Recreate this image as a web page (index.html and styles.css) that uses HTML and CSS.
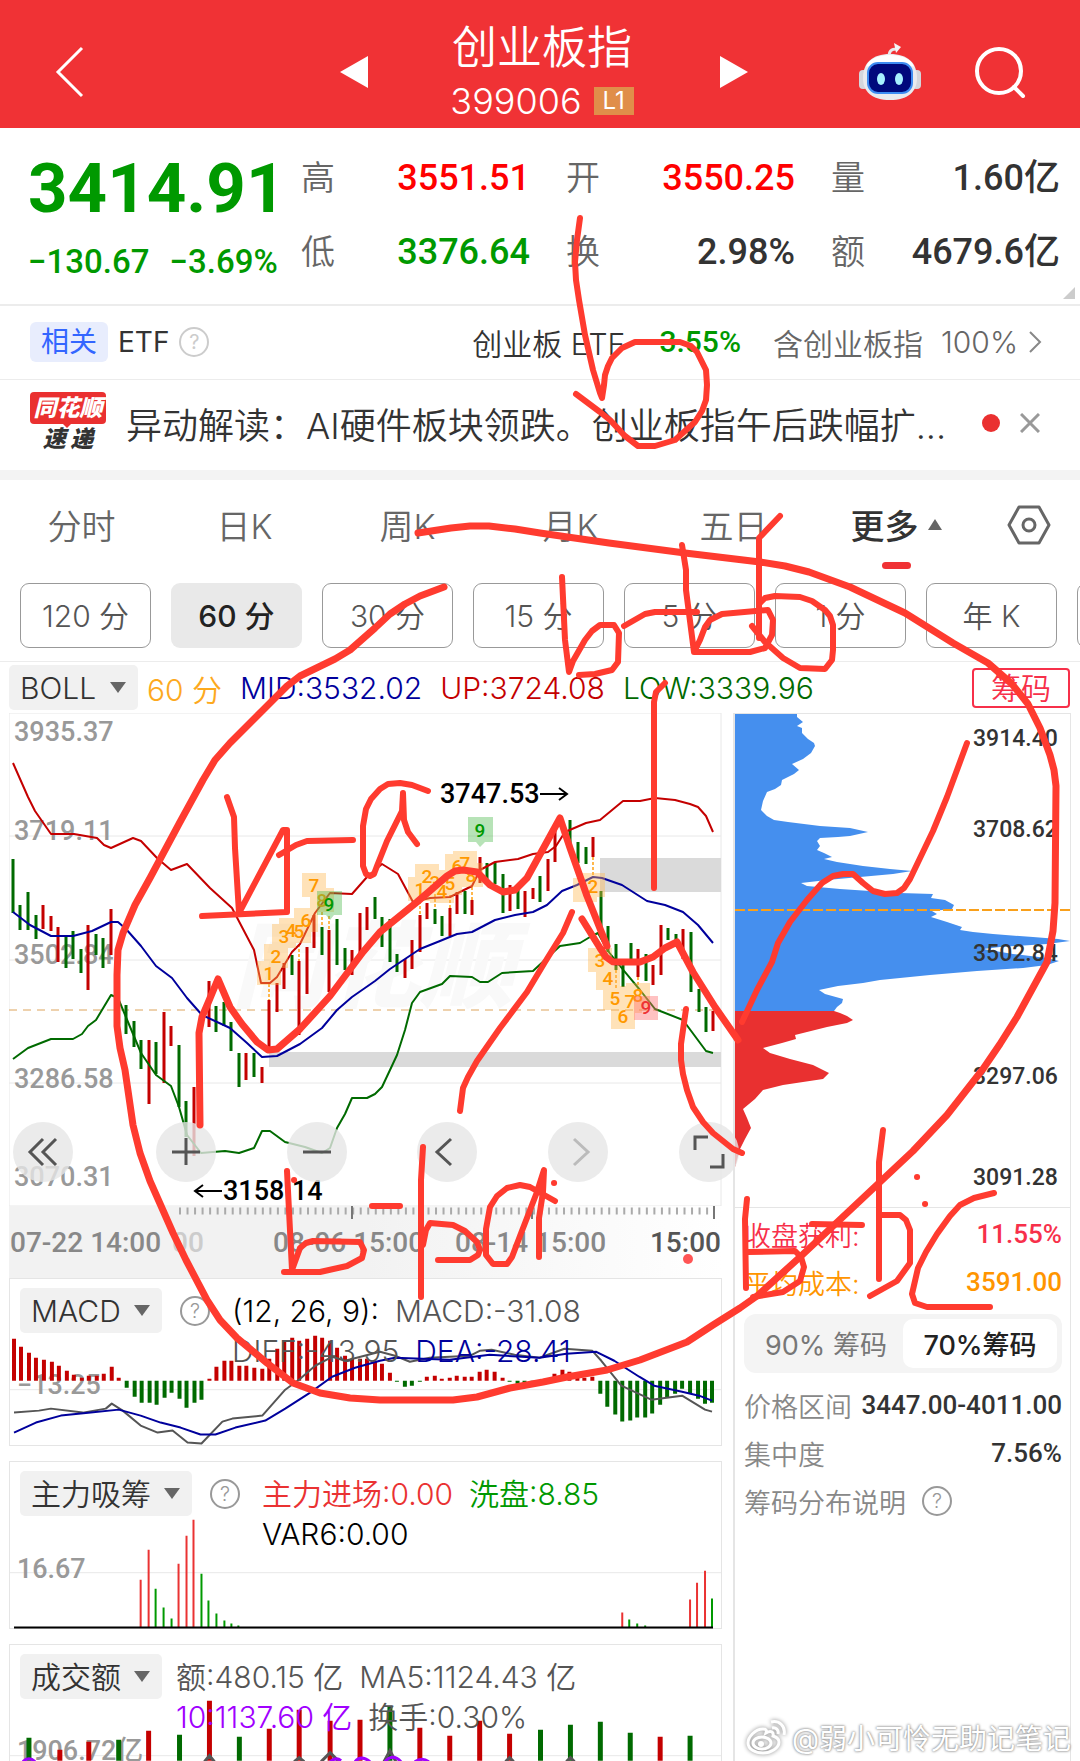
FILE: index.html
```html
<!DOCTYPE html>
<html lang="zh-CN">
<head>
<meta charset="utf-8">
<meta name="viewport" content="width=device-width, initial-scale=1">
<title>创业板指 399006</title>
<link rel="stylesheet" href="styles.css">
</head>
<body>
<div class="page">
<header class="topbar">
  <button class="icon-btn back" aria-label="返回"><svg width="30" height="54" viewBox="0 0 30 54"><path d="M27 3 3 27l24 24" fill="none" stroke="#fff" stroke-width="3"/></svg></button>
  <button class="icon-btn prev" aria-label="上一个"><svg width="28" height="32" viewBox="0 0 28 32"><path d="M28 0v32L0 16z" fill="#fff"/></svg></button>
  <div class="title">
    <h1>创业板指</h1>
    <div class="code"><span>399006</span><span class="level">L1</span></div>
  </div>
  <button class="icon-btn next" aria-label="下一个"><svg width="28" height="32" viewBox="0 0 28 32"><path d="M0 0v32l28-16z" fill="#fff"/></svg></button>
  <button class="icon-btn robot" aria-label="智能助手"><svg width="64" height="58" viewBox="0 0 64 58">
    <path d="M31 14c0-6 2-8 8-8" fill="none" stroke="#e9e9ec" stroke-width="3"/><path d="m36 0 7 4-5 6z" fill="#f4f4f6"/>
    <rect x="1" y="27" width="9" height="19" rx="4" fill="#d4d6dc"/><rect x="54" y="27" width="9" height="19" rx="4" fill="#d4d6dc"/>
    <path d="M32 11c18 0 27 9 27 24 0 14-9 22-27 22S5 49 5 35c0-15 9-24 27-24z" fill="#e9eaee"/>
    <path d="M32 12c14 0 22 5 24 12-12-5-36-5-48 0 2-7 10-12 24-12z" fill="#fff"/>
    <rect x="10" y="20" width="44" height="30" rx="10" fill="#00097c" stroke="#3d8cf2" stroke-width="2"/>
    <ellipse cx="23" cy="36" rx="4" ry="6" fill="#a6f1ff"/><ellipse cx="41" cy="36" rx="4" ry="6" fill="#a6f1ff"/></svg></button>
  <button class="icon-btn search" aria-label="搜索"><svg width="52" height="52" viewBox="0 0 52 52"><circle cx="25" cy="25" r="22" fill="none" stroke="#fff" stroke-width="4"/><path d="m40 41 9 9" stroke="#fff" stroke-width="4" stroke-linecap="round"/></svg></button>
</header>

<section class="quote">
  <div class="last">
    <div class="price num">3414.91</div>
    <div class="change num"><span>−130.67</span><span>−3.69%</span></div>
  </div>
  <dl class="stats">
    <div><dt>高</dt><dd class="num up">3551.51</dd></div>
    <div><dt>开</dt><dd class="num up">3550.25</dd></div>
    <div><dt>量</dt><dd class="num">1.60亿</dd></div>
    <div><dt>低</dt><dd class="num down">3376.64</dd></div>
    <div><dt>换</dt><dd class="num">2.98%</dd></div>
    <div><dt>额</dt><dd class="num">4679.6亿</dd></div>
  </dl>
  <svg class="corner" width="12" height="12" viewBox="0 0 12 12"><path d="M12 0v12H0z" fill="#ccc"/></svg>
</section>

<section class="etf">
  <span class="tag">相关</span><span>ETF</span>
  <button class="help light" aria-label="说明">?</button>
  <a class="fund" href="#"><span>创业板 ETF</span><span class="pct num">-3.55%</span><span class="muted">含创业板指</span><span class="muted share">100%</span>
  <svg width="14" height="24" viewBox="0 0 14 24"><path d="m2 2 10 10L2 22" fill="none" stroke="#888" stroke-width="2"/></svg></a>
</section>

<section class="news">
  <div class="brand"><span class="brand-top">同花顺</span><span class="brand-bottom">速 递</span></div>
  <a href="#">异动解读：AI硬件板块领跌。创业板指午后跌幅扩...</a>
  <i class="dot"></i>
  <button class="icon-btn" aria-label="关闭"><svg width="20" height="20" viewBox="0 0 20 20"><path d="m1 1 18 18M19 1 1 19" stroke="#999" stroke-width="3"/></svg></button>
</section>

<nav class="tabs">
  <a href="#">分时</a><a href="#">日K</a><a href="#">周K</a><a href="#">月K</a><a href="#">五日</a>
  <a href="#" class="active">更多<svg width="16" height="11" viewBox="0 0 16 11"><path d="m8 0 7 11H1z" fill="#666"/></svg></a>
  <button class="icon-btn" aria-label="设置"><svg width="44" height="40" viewBox="0 0 44 40"><path d="M12 2h20l10 18-10 18H12L2 20z" fill="none" stroke="#666" stroke-width="3" stroke-linejoin="round"/><circle cx="22" cy="20" r="6" fill="none" stroke="#666" stroke-width="3"/></svg></button>
</nav>
<div class="periods">
  <button>120 分</button><button class="active">60 分</button><button>30 分</button><button>15 分</button><button>5 分</button><button>1 分</button><button>年 K</button><button aria-label="更多周期"></button>
</div>

<div class="indicator">
  <label class="pick"><select aria-label="主图指标"><option>BOLL</option></select></label>
  <span class="c-orange">60 分</span><span class="c-blue">MID:3532.02</span><span class="c-red">UP:3724.08</span><span class="c-green">LOW:3339.96</span>
  <button class="chip-btn">筹码</button>
</div>

<main class="board">
<div class="charts">
  <div class="kline">
  <svg class="plot" viewBox="9 713 713 493">
    <path d="M9 713h712v493H9zM9 836h712M9 960h712M9 1083h712" fill="none" stroke="#e8e8e8" stroke-width="1"/>
    <text class="ghost" x="232" y="1000">同花顺</text>
    <path d="M269 1052h452v15H269zM600 858h121v34H600z" fill="#dadada"/>
    <path d="M9 1010h712" stroke="#dda45c" stroke-width="1" stroke-dasharray="8 6"/>
    <g class="axis"><text x="14" y="741">3935.37</text><text x="14" y="840">3719.11</text><text x="14" y="964">3502.84</text><text x="14" y="1088">3286.58</text><text x="14" y="1186">3070.31</text></g>
    <path class="k-down" d="M13 859v54M20 905v25M28 892v38M36 915v24M66 937v31M73 931v28M81 949v24M96 934v21M103 938v30M126 1005v29M134 1021v26M141 1040v29M156 1042v32M179 1045v62M186 1101v36M216 1006v26M224 1002v24M231 1022v29M239 1053v34M254 1053v24M292 955v20M322 927v28M337 919v46M345 948v22M375 897v22M382 917v30M390 919v43M397 954v18M435 909v15M442 916v20M465 891v23M487 863v18M495 862v22M503 874v39M518 885v24M540 876v26M570 820v32M578 842v21M586 847v17M601 891v42M608 926v26M616 944v26M623 959v28M631 943v22M646 954v27M668 928v12M676 934v8M691 932v60M699 989v23M706 1007v25"/>
    <path class="k-up" d="M43 905v24M51 916v15M58 927v35M88 925v65M111 909v46M149 1040v64M164 1012v71M171 1026v20M194 1087v69M209 981v46M246 1053v27M262 1067v16M269 1000v48M277 983v29M284 963v26M299 961v74M307 947v47M314 915v33M329 930v62M352 950v25M360 913v42M367 907v23M405 959v19M412 940v29M420 915v37M427 903v16M450 908v28M457 892v22M472 900v15M480 857v26M510 885v26M525 891v26M533 888v11M548 859v32M555 828v34M593 837v20M638 949v28M653 965v20M661 925v50M683 929v30M713 1011v20"/>
    <path d="M269 984v16M299 944v17M322 912v15M329 916v14M420 901v14M435 894v15M450 895v13M472 887v13M593 857v18M616 970v18M638 977v8" stroke="#ffb74d" stroke-width="2" stroke-dasharray="3 2"/>
    <path class="line" stroke="#c40000" d="M13 763L28 797 35 811 51 834 74 834 97 838 104 845 111 848 133 838 141 841 157 858 171 870 187 864 210 888 232 908 254 950 261 983 270 983 277 977 292 952 300 944 315 913 330 893 352 894 367 877 382 864 398 874 413 902 430 898 450 897 472 886 480 870 495 862 518 859 533 854 548 852 556 846 565 832 586 823 600 820 623 801 640 801 655 798 675 800 690 804 698 807 706 816 713 832"/>
    <path class="line" stroke="#00009c" d="M13 912L30 925 51 936 73 936 92 931 111 922 118 922 126 929 141 946 156 966 172 978 187 998 202 1015 230 1028 247 1043 262 1057 277 1056 300 1044 322 1028 337 1010 352 997 375 981 390 969 405 959 420 949 440 941 457 934 472 932 495 920 515 915 533 912 547 905 562 891 577 885 593 877 602 878 622 885 647 901 665 905 683 912 698 925 713 943"/>
    <path class="line" stroke="#006a00" d="M13 1059L28 1048 51 1039 73 1039 82 1034 88 1026 96 1020 111 995 118 998 128 1022 141 1053 156 1075 171 1086 179 1107 187 1135 201 1153 225 1151 239 1153 254 1148 262 1131 270 1131 285 1142 305 1147 322 1153 330 1148 337 1128 345 1114 352 1098 367 1098 375 1094 382 1087 390 1070 397 1055 405 1030 412 1003 420 992 442 984 450 976 472 977 480 982 488 982 502 973 533 971 547 958 560 946 580 943 590 937 598 933 608 951 620 966 640 990 655 1009 683 1020 706 1051 713 1053"/>
    <g class="td"><path d="M257 961h24v24h-24zM264 944h24v24h-24zM272 924h24v24h-24zM279 918h24v24h-24zM287 919h24v24h-24zM294 908h24v24h-24zM302 873h24v24h-24zM310 888h24v24h-24zM408 877h24v24h-24zM415 864h24v24h-24zM423 870h24v24h-24zM430 879h24v24h-24zM438 871h24v24h-24zM445 854h24v24h-24zM453 851h24v24h-24zM459 863h24v24h-24zM573 878h24v24h-24zM581 873h24v24h-24zM588 948h24v24h-24zM596 966h24v24h-24zM603 986h24v24h-24zM611 1005h24v24h-24zM618 989h24v24h-24zM626 983h24v24h-24z"/>
    <text x="269" y="980">1</text><text x="276" y="963">2</text><text x="284" y="943">3</text><text x="291" y="937">4</text><text x="299" y="938">5</text><text x="306" y="927">6</text><text x="314" y="892">7</text><text x="322" y="907">8</text>
    <text x="420" y="896">1</text><text x="427" y="883">2</text><text x="435" y="889">3</text><text x="442" y="898">4</text><text x="450" y="890">5</text><text x="457" y="873">6</text><text x="465" y="870">7</text><text x="471" y="882">8</text>
    <text x="593" y="893">2</text><text x="600" y="967">3</text><text x="608" y="985">4</text><text x="615" y="1005">5</text><text x="623" y="1023">6</text><text x="630" y="1008">7</text><text x="638" y="1002">8</text></g>
    <g class="td g"><path d="M317 891h25v24h-8l-4 5-4-5h-9zM468 817h25v25h-8l-5 5-4-5h-8z"/><text x="329" y="911">9</text><text x="480" y="837">9</text></g>
    <g class="td r"><path d="M634 996h24v24h-24z"/><text x="646" y="1014">9</text></g>
    <g class="mark"><text x="440" y="803">3747.53</text><path d="M540 794h27m-8-6 8 6-8 6M222 1191h-27m8-6-8 6 8 6"/><text x="223" y="1200">3158.14</text></g>
  </svg>
  <div class="tools">
    <button aria-label="更早"><svg viewBox="0 0 60 60"><path d="M30 17 17 30l13 13M43 17 30 30l13 13"/></svg></button>
    <button aria-label="放大"><svg viewBox="0 0 60 60"><path d="M30 16v27M16 30h28"/></svg></button>
    <button aria-label="缩小"><svg viewBox="0 0 60 60"><path d="M16 30h28"/></svg></button>
    <button aria-label="左移"><svg viewBox="0 0 60 60"><path d="M34 17 20 30l14 13"/></svg></button>
    <button aria-label="右移" disabled><svg viewBox="0 0 60 60"><path d="m26 17 14 13-14 13"/></svg></button>
    <button aria-label="全屏"><svg viewBox="0 0 60 60"><path d="M16 28V15h13M44 32v13H31"/></svg></button>
  </div>
  </div>
  <svg class="plot time" viewBox="9 1206 713 72">
    <defs><linearGradient id="fade"><stop offset=".5" stop-color="#f2f2f2"/><stop offset="1" stop-color="#fff"/></linearGradient></defs>
    <path d="M9 1206h713v72H9z" fill="url(#fade)"/>
    <path d="M179 1211h535" stroke="#aaa" stroke-width="7" stroke-dasharray="2 5.53"/>
    <path d="M352 1206v13M532 1206v13M714 1206v13" stroke="#777" stroke-width="2"/>
    <text x="10" y="1252">07-22 14:00</text><text x="172" y="1252" class="pale">00</text><text x="273" y="1252">08-06 15:00</text><text x="455" y="1252">08-14 15:00</text><text x="721" y="1252" class="now">15:00</text>
    <circle cx="688" cy="1259" r="5" fill="#f55"/>
  </svg>

  <section class="panel">
    <svg class="plot" viewBox="9 1278 713 168">
      <path d="M9 1389h713" stroke="#e8e8e8"/>
      <text class="axis" x="16" y="1393">−13.25</text>
      <path stroke="#c40000" stroke-width="4" d="M13 1380v-42M20 1380v-34M28 1380v-28M35 1380v-23M43 1380v-21M51 1380v-19M58 1380v-15M66 1380v-10M73 1380v-6M81 1380v-3M88 1380v-5M96 1380v-5M103 1380v-7M111 1380v-14M118 1380v-3M209 1380v-2M216 1380v-14M224 1380v-20M231 1380v-20M239 1380v-15M246 1380v-15M254 1380v-13M262 1380v-12M269 1380v-22M277 1380v-32M284 1380v-40M292 1380v-43M299 1380v-40M307 1380v-42M315 1380v-45M322 1380v-43M330 1380v-40M337 1380v-33M345 1380v-25M352 1380v-22M360 1380v-22M367 1380v-22M375 1380v-20M382 1380v-17M390 1380v-8M427 1380v-4M435 1380v-5M442 1380v-2M450 1380v-3M457 1380v-5M465 1380v-4M472 1380v-4M480 1380v-9M487 1380v-11M495 1380v-9M503 1380v-3M555 1380v-7M563 1380v-11M570 1380v-9M578 1380v-5M585 1380v-3M593 1380v-4"/>
      <path stroke="#006a00" stroke-width="4" d="M126 1380v7M134 1380v16M141 1380v22M149 1380v22M156 1380v24M164 1380v17M171 1380v12M179 1380v18M186 1380v27M194 1380v22M201 1380v19M397 1380v1M405 1380v6M412 1380v5M420 1380v1M510 1380v1M518 1380v3M525 1380v3M533 1380v2M540 1380v1M601 1380v13M608 1380v26M616 1380v34M623 1380v41M631 1380v40M638 1380v37M646 1380v37M653 1380v33M661 1380v24M668 1380v17M676 1380v13M683 1380v8M691 1380v13M699 1380v18M706 1380v23M713 1380v22"/>
      <path class="line" stroke="#555" d="M13 1412L38 1410 50 1408 82 1412 105 1408 111 1403 122 1410 140 1425 157 1432 172 1430 187 1442 201 1443 222 1421 232 1418 262 1415 285 1389 300 1378 315 1365 332 1356 345 1360 380 1351 395 1355 410 1361 430 1357 470 1355 480 1350 492 1349 515 1354 540 1357 565 1348 593 1350 602 1360 622 1385 652 1399 683 1395 706 1409 713 1411"/>
      <path class="line" stroke="#00009c" d="M13 1432L35 1422 60 1415 90 1412 118 1409 140 1415 160 1422 180 1427 200 1434 215 1434 235 1427 265 1420 285 1408 310 1392 332 1376 355 1367 380 1360 395 1357 450 1359 490 1354 540 1357 567 1353 597 1351 615 1360 640 1376 655 1385 683 1391 700 1395 713 1400"/>
    </svg>
    <div class="legend"><label class="pick"><select aria-label="副图指标一"><option>MACD</option></select></label><button class="help gap" aria-label="说明">?</button>
    <p><span class="c-black">(12, 26, 9):</span><span>MACD:-31.08</span><br><span>DIFF:-43.95</span><span class="c-blue">DEA:-28.41</span></p></div>
  </section>
  <section class="panel">
    <svg class="plot" viewBox="9 1461 713 168">
      <path d="M9 1572h713" stroke="#e8e8e8"/><text class="axis" x="16" y="1577">16.67</text>
      <path stroke="#ea3232" stroke-width="2" d="M140 1627v-48M148 1627v-78M178 1627v-64M186 1627v-92M193 1627v-108M623 1627v-15M691 1627v-28M698 1627v-45M706 1627v-57"/>
      <path stroke="#090" stroke-width="2" d="M155 1627v-39M163 1627v-20M171 1627v-9M201 1627v-54M208 1627v-27M216 1627v-14M224 1627v-7M231 1627v-4M238 1627v-2M630 1627v-8M638 1627v-4M646 1627v-2M713 1627v-29"/>
      <path d="M13 1627h701" stroke="#000" stroke-width="2"/>
    </svg>
    <div class="legend"><label class="pick"><select aria-label="副图指标二"><option>主力吸筹</option></select></label><button class="help gap" aria-label="说明">?</button>
    <p><span class="c-bright">主力进场:0.00</span><span class="c-lime">洗盘:8.85</span><br><span class="c-black">VAR6:0.00</span></p></div>
  </section>
  <section class="panel cut">
    <svg class="plot" viewBox="9 1645 713 116">
      <path d="M9 1756h713" stroke="#e8e8e8"/><text class="axis" x="16" y="1760">1906.72亿</text>
      <path stroke="#c40000" stroke-width="5" d="M59 1761v-11M88 1761v-19M148 1761v-30M209 1761v-60M269 1761v-32M299 1761v-51M330 1761v-40M360 1761v-41M420 1761v-33M450 1761v-25M480 1761v-40M510 1761v-27M661 1761v-24"/>
      <path stroke="#006a00" stroke-width="5" d="M28 1761v-23M118 1761v-21M179 1761v-26M239 1761v-24M390 1761v-54M541 1761v-31M571 1761v-36M601 1761v-39M631 1761v-28M691 1761v-25"/>
      <path fill="none" stroke="#555" stroke-width="3" d="m204 1762 5-6 5 6M294 1762l5-4 5 4M321 1762l9-9 9 9M384 1762l6-11 6 11M506 1762l4-4 4 4M567 1762l4-4 4 4"/>
      <path fill="none" stroke="#a000ff" stroke-width="3" d="M22 1762q6-6 12 0M330 1762q6-5 11-1M355 1762q6-7 15 0M385 1762q8-9 16 0M415 1762q7-5 14 0"/>
    </svg>
    <div class="legend"><label class="pick"><select aria-label="副图指标三"><option>成交额</option></select></label>
    <p><span>额:480.15 亿</span><span>MA5:1124.43 亿</span><br><span class="c-purple">10:1137.60 亿</span><span>换手:0.30%</span></p></div>
  </section>
</div>

<aside class="chips">
  <svg class="plot" viewBox="735 713 335 493">
    <path fill="#458fee" d="M735 713H797V716L803 721 797 725 802 727 802 732 808 738 814 742 815 745 811 752 803 758 792 763 799 769 794 773 782 779 781 784 775 788 767 791 763 800 761 809 767 815 774 819 788 821 820 825 850 827 868 831 850 835 838 836 820 837 817 840 820 845 817 849 824 852 832 856 824 858 837 861 863 865 890 868 912 870 893 873 860 876 827 879 801 882 807 885 840 888 900 892 933 893 931 897 945 899 954 904 952 908 932 910 937 913 931 916 947 921 962 926 960 929 973 931 993 933 1033 936 1058 938 1070 940 1047 943 1000 946 983 948 1013 953 1047 957 1059 960 1047 964 1023 967 977 970 930 974 900 977 880 979 863 982 838 985 819 989 825 993 843 998 842 1002 837 1006 834 1010H735z"/>
    <path fill="#e93030" d="M735 1010H834L840 1012 847 1015 853 1019 847 1022 827 1026 807 1031 795 1034 796 1038 782 1042 763 1047 770 1052 790 1058 813 1064 829 1072 823 1078 783 1084 763 1089 755 1098 743 1108 747 1117 751 1127 745 1138 740 1148 735 1166z"/>
    <path d="M735 909h335" stroke="#f9a01b" stroke-width="2" stroke-dasharray="10 3"/>
    <g class="scale"><text x="973" y="745">3914.40</text><text x="973" y="836">3708.62</text><text x="973" y="960">3502.84</text><text x="973" y="1083">3297.06</text><text x="973" y="1184">3091.28</text></g>
  </svg>
  <div class="facts">
    <div class="fact c-pink"><span>收盘获利:</span><b class="num">11.55%</b></div>
    <div class="fact c-amber"><span>平均成本:</span><b class="num">3591.00</b></div>
    <div class="segment"><button>90% 筹码</button><button class="on">70%筹码</button></div>
    <div class="fact"><span>价格区间</span><b class="num">3447.00-4011.00</b></div>
    <div class="fact"><span>集中度</span><b class="num">7.56%</b></div>
    <div class="fact note"><span>筹码分布说明</span><button class="help" aria-label="说明">?</button></div>
  </div>
</aside>
</main>

<div class="credit"><svg width="42" height="36" viewBox="0 0 42 36"><g fill="none" stroke="#fff" stroke-width="3"><path d="M17 10C9 10 2 18 2 24c0 6 7 10 15 10s16-5 16-11c0-4-3-5-6-6 1-4-2-6-7-3 1-3 0-4-3-4z"/><ellipse cx="16" cy="24" rx="9" ry="6"/><path d="M25 3c8-2 15 4 13 13M26 9c4-1 7 2 6 6"/></g><circle cx="15" cy="25" r="3" fill="#fff"/></svg><span>@弱小可怜无助记笔记</span></div>

<svg class="ink" viewBox="0 0 1080 1761" aria-hidden="true">
  <path d="M444 587L420 596 405 604 390 614 375 628 350 650 335 659 300 676 287 686 273 700 250 723 230 743 215 760 203 780 180 822 150 878 135 905 123 933 118 950 117 975 117 1026 120 1048 125 1070 133 1125 140 1153 150 1181 173 1233 186 1260 207 1300 220 1320 237 1338 267 1363 293 1383 320 1393 350 1398 380 1400 453 1400 477 1397 510 1388 543 1382 567 1377 607 1370 640 1360 687 1342 713 1325 740 1308 757 1296 800 1257 847 1213 880 1182 913 1151 947 1115 983 1069 1000 1044 1017 1017 1047 962 1053 931 1055 903 1056 786 1054 770 1050 755 1040 728 1028 704 1012 684 988 663 953 643 905 613 850 587 809 572 785 566 760 562 685 553 609 543 540 533 515 529 489 526 470 526 451 528 418 533" stroke-width="7"/>
  <path d="M580 218L577 240 575 262 576 280 579 300 585 335 593 370 600 393 602 398 604 385 605 375 608 366 612 358 622 348 635 342 680 342 691 346 697 352 706 370 707 385 706 400 702 411 695 422 675 440 655 446 638 446 625 436 610 420 600 412 576 394"/>
  <path d="M562 577L565 640 569 672 573 661 585 640 592 631 600 625 614 625 619 633 618 662 612 670 595 674 579 675M624 626L645 614 655 612 697 612M682 545L686 570 686 590 694 652 700 640 705 627 710 620 722 614 768 610 773 620 772 635 765 648 750 652 694 652M780 516L759 538V638M752 626L765 642 783 658 800 668 825 669 832 660 833 650 833 625 830 616 825 610 812 601 800 597 775 596 765 598 760 603"/>
  <path d="M665 683L656 692 654 702V888M227 797L234 817 235 848 239 913 283 830 287 830V912L202 916M279 855L296 845 307 841 353 840M428 791L412 785 400 783 388 784 380 789 371 799 366 809 363 826 363 866 366 874 370 876 374 874 377 866 387 841 402 811 403 793 404 820 408 832 417 844"/>
  <path d="M200 1125L199 1033 202 1017 208 1003 218 979 230 1007 242 1024 257 1042 268 1050 277 1049 300 1029 330 996 363 952 380 932 417 902 447 876 455 871 463 870 477 872 490 885 503 892 515 890 527 878 560 818 570 848 587 896 607 946M582 919L600 948 606 957 613 962 640 962 653 957 665 948 677 942 693 972 715 1007 738 1040" stroke-width="7"/>
  <path d="M742 1022L757 990 772 962 778 943 790 922 807 900 822 883 833 876 843 874 853 874 863 883 873 891 885 894 897 893 904 888 910 879 933 831 947 797 967 743M572 912L563 933 545 962 527 992 500 1028 477 1061 468 1077 463 1088 460 1111M686 1009L681 1044 681 1060 683 1074 687 1090 693 1107 703 1122 713 1133 733 1149 742 1153"/>
  <path d="M287 1171L292 1270 300 1248 306 1243 313 1241 360 1242 364 1250 362 1258 347 1266 320 1272H284M372 1206H400M423 1147L421 1180V1297M423 1245L426 1230 430 1223 453 1225 465 1231 477 1242 480 1250 478 1255 470 1260H438M555 1201L530 1187 520 1185 507 1188 497 1196 490 1207 486 1229 486 1255 493 1264 507 1264 512 1257 520 1236 537 1192 544 1170 543 1192 539 1218V1257"/>
  <path d="M747 1199L745 1219 746 1288M748 1252L795 1251 801 1257 804 1267 800 1281 783 1292 753 1297M812 1224L862 1225M883 1130L879 1162V1279M880 1215L900 1215 906 1220 910 1230V1263L897 1281 870 1296M994 1193L974 1198 960 1205 950 1216 937 1234 926 1252 918 1268 912 1294 915 1303 927 1307H990"/>
  <path d="M294 1180h.1M554 1183h.1M917 1177h.1M925 1204h.1"/>
</svg>
</div>
</body>
</html>
```
FILE: styles.css
```css
* { box-sizing: border-box; }
body {
  margin: 0;
  background: #fff;
  color: #333;
  font-family: "Inter", "Noto Sans CJK SC", sans-serif;
  font-size: 30px;
}
h1, dl, dd, p { margin: 0; font-weight: 400; }
a { color: inherit; text-decoration: none; }
button, select { font: inherit; color: inherit; border: 0; background: none; padding: 0; }
svg { display: block; }
.page { position: relative; overflow: hidden; }
.num { font-family: "Roboto", "Noto Sans CJK SC", sans-serif; font-weight: 500; }

.topbar { display: flex; align-items: center; height: 128px; padding: 16px 54px 0 55px; background: #f03235; color: #fff; }
.title { width: 352px; padding-right: 4px; text-align: center; }
.title h1 { font-size: 45px; line-height: 58px; font-weight: 350; }
.code { display: flex; justify-content: center; align-items: center; gap: 12px; font-size: 36px; line-height: 48px; font-weight: 350; }
.level { background: #e08e4a; font-size: 24px; line-height: 28px; width: 40px; font-weight: 400; }
.prev { margin-left: auto; }
.title + .next { margin-right: 110px; }
.search { margin-left: 52px; }

.quote { position: relative; display: flex; justify-content: space-between; height: 178px; padding: 20px 20px 0 28px; border-bottom: 2px solid #ececec; }
.price { color: #090; font-size: 69px; line-height: 82px; font-weight: 700; }
.change { display: flex; gap: 20px; margin-top: 12px; color: #090; font-size: 33px; line-height: 40px; }
.stats { display: grid; grid-template-columns: 229px 229px 229px; column-gap: 36px; grid-auto-rows: 74px; }
.stats div { display: flex; justify-content: space-between; line-height: 60px; }
.stats dt { font-size: 34px; font-weight: 350; color: #666; }
.stats dd { font-size: 36px; }
.up { color: #f00; }
.down { color: #090; }
.corner { position: absolute; right: 5px; bottom: 5px; }

.etf { display: flex; align-items: center; gap: 10px; height: 74px; padding: 0 38px 2px 30px; border-bottom: 1px solid #ececec; font-size: 28px; }
.tag { background: #e8edfd; color: #36f; border-radius: 6px; line-height: 40px; padding: 0 11px; }
.fund { display: flex; align-items: center; margin-left: auto; font-size: 30px; font-weight: 350; }
.pct { color: #090; margin: 0 32px 0 24px; }
.muted { color: #666; }
.share { margin: 0 10px 0 18px; }
.help { width: 30px; height: 30px; border: 2px solid #999; border-radius: 50%; font-size: 20px; line-height: 24px; color: #999; flex: none; }
.help.light { border-color: #ccc; color: #ccc; }

.news { display: flex; align-items: center; height: 90px; padding: 0 40px 4px 30px; }
.brand { width: 76px; margin-right: 20px; font-style: italic; font-weight: 900; font-size: 23px; text-align: center; }
.brand-top { position: relative; display: block; background: #ea3030; color: #fff; border-radius: 4px; line-height: 32px; }
.brand-top::after { content: ""; position: absolute; left: 32px; top: 31px; border: 5px solid transparent; border-top-color: #ea3030; border-bottom: 0; }
.brand-bottom { display: block; line-height: 30px; }
.news a { flex: 1; min-width: 0; font-size: 36px; font-weight: 350; white-space: nowrap; }
.dot { width: 18px; height: 18px; margin: 0 20px; border-radius: 50%; background: #ea3030; }

.tabs { display: grid; grid-template-columns: repeat(6, 163fr) 102fr; align-items: center; justify-items: center; height: 113px; padding-bottom: 14px; border-top: 10px solid #f3f3f3; font-size: 34px; font-weight: 350; color: #666; }
.tabs .active { position: relative; display: flex; align-items: center; gap: 8px; color: #333; font-weight: 500; }
.tabs .active::after { content: ""; position: absolute; left: 31px; bottom: -20px; width: 29px; height: 7px; border-radius: 4px; background: #f03235; }

.periods { display: flex; gap: 20px; height: 79px; padding-left: 20px; border-bottom: 1px solid #ececec; overflow: hidden; }
.periods button { flex: 0 0 131px; height: 65px; padding-bottom: 4px; border: 1px solid #999; border-radius: 9px; font-weight: 350; color: #555; }
.periods .active { border: 0; background: #e9e9e9; color: #222; font-weight: 500; }

.indicator { display: flex; align-items: center; gap: 18px; height: 51px; padding: 0 10px 0 9px; white-space: nowrap; font-weight: 350; }
.indicator .pick { margin-right: -9px; }
.chip-btn { margin-left: auto; width: 98px; height: 40px; border: 2px solid #f7304a; border-radius: 4px; color: #f7304a; line-height: 34px; }
.pick { position: relative; background: #f1f1f1; border-radius: 5px; display: block; height: 45px; }
.pick select { appearance: none; height: 45px; padding: 0 41px 0 11px; }
.pick::after { content: ""; position: absolute; right: 12px; top: 17px; border: 8px solid transparent; border-top: 11px solid #666; border-bottom: 0; pointer-events: none; }

.c-orange { color: #fda91e; } .c-blue { color: #00009c; } .c-red { color: #c40000; } .c-green { color: #006a00; }
.c-black { color: #000; } .c-bright { color: #ea3232; } .c-lime { color: #090; } .c-purple { color: #a000ff; }

.board { display: grid; grid-template-columns: minmax(0, 713fr) minmax(0, 338fr); column-gap: 11px; padding: 0 9px; }
.plot { width: 100%; height: auto; }
.kline { position: relative; }
.plot text { font-family: "Roboto", "Noto Sans CJK SC", sans-serif; font-weight: 500; }
.axis { font-size: 27px; fill: #999; }
.plot .ghost { font: italic 900 94px "Noto Sans CJK SC", sans-serif; fill: #f9f9f9; }
.k-up, .k-down { stroke: #c40000; stroke-width: 3; }
.k-down { stroke: #006a00; }
.line { fill: none; stroke-width: 2; stroke-linejoin: round; }
.td { fill: #f90; font-size: 19px; text-anchor: middle; }
.td path { fill: #ffb74d; fill-opacity: .4; }
.td.g { fill: #090; } .td.g path { fill: #4cb84c; }
.td.r { fill: #e33; } .td.r path { fill: #f66; }
.mark { font-size: 27px; }
.mark path { fill: none; stroke: #000; stroke-width: 2; }
.time text { font-size: 28px; fill: #888; }
.plot .pale { fill: #ccc; }
.time .now { fill: #555; text-anchor: end; }
.scale { font-size: 23px; fill: #333; }

.tools { position: absolute; left: 4px; right: -17px; bottom: 24px; display: flex; justify-content: space-between; z-index: 1; }
.tools button { width: 60px; height: 60px; border-radius: 50%; background: rgba(230, 230, 230, .8); }
.tools button:first-child { margin-right: 12px; }
.tools path { fill: none; stroke: #555; stroke-width: 3; }
.tools :disabled path { stroke: #bbb; }

.panel { position: relative; height: 168px; margin-bottom: 15px; border: 1px solid #e5e5e5; }
.panel > .plot { position: absolute; left: 0; top: 0; }
.panel.cut { height: 117px; margin: 0; border-bottom: 0; overflow: hidden; }
.legend { position: relative; display: flex; align-items: flex-start; padding: 9px 0 0 10px; font-weight: 350; }
.legend p { margin: 3px 0 0 20px; line-height: 40px; white-space: nowrap; color: #555; font-weight: 350; }
.cut .legend p { margin-left: 14px; }
.legend p span { margin-right: 16px; }
.legend .help { margin: 8px 2px 0 18px; }

.chips { border: 1px solid #e5e5e5; border-width: 1px 1px 0 2px; }
.facts { border-top: 1px solid #e5e5e5; padding: 2px 8px 0 9px; }
.fact { display: flex; justify-content: space-between; align-items: center; height: 48px; font-size: 27px; font-weight: 350; color: #888; white-space: nowrap; }
.fact b { font-size: 26px; color: #333; }
.fact.c-pink, .c-pink b { color: #f7304a; }
.fact.c-amber, .c-amber b { color: #ff9500; }
.note { justify-content: flex-start; gap: 16px; }
.segment { display: flex; margin: 8px 0; padding: 5px; height: 59px; border-radius: 12px; background: #f4f4f4; font-size: 27px; }
.segment button { flex: 1; border-radius: 10px; color: #777; white-space: nowrap; }
.segment .on { background: #fff; color: #222; font-weight: 500; }

.credit { position: absolute; right: 9px; bottom: 4px; display: flex; align-items: center; gap: 4px; font-size: 28px; color: #fff; text-shadow: 0 0 3px #888, 0 0 2px #999; }
.credit svg { filter: drop-shadow(0 0 2px #888); }
.ink { position: absolute; left: 0; top: 0; width: 100%; z-index: 2; pointer-events: none; fill: none; stroke: #ff3b2f; stroke-width: 6; stroke-linecap: round; stroke-linejoin: round; }
```
